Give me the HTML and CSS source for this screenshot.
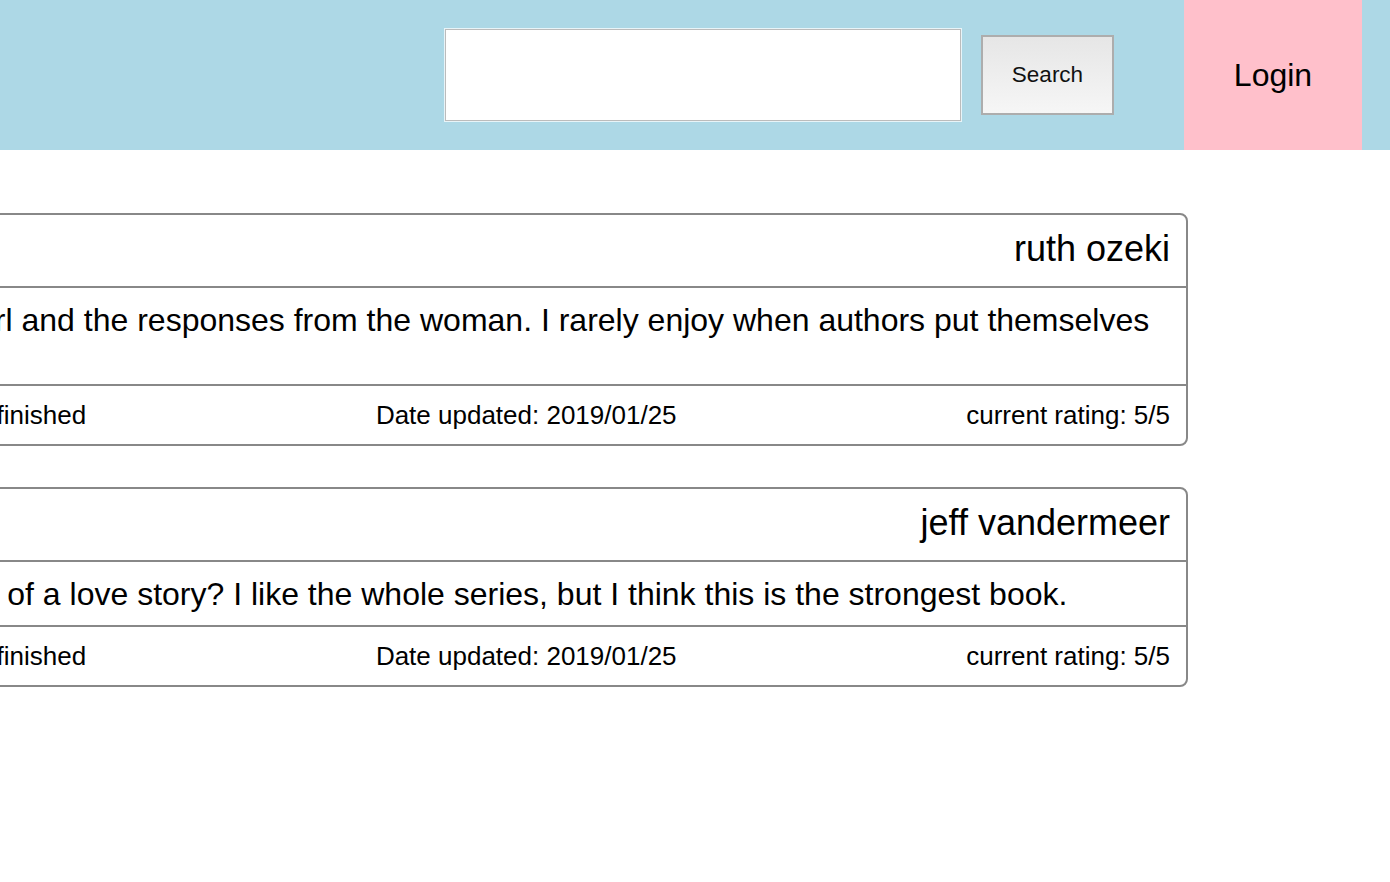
FILE: index.html
```html
<!DOCTYPE html>
<html lang="en">
<head>
<meta charset="utf-8">
<title>Book reviews</title>
<link rel="stylesheet" href="styles.css">
</head>
<body>
<header class="topbar">
  <form class="search">
    <input class="search-input" type="text" aria-label="Search">
    <button class="search-btn" type="button">Search</button>
  </form>
  <a class="login">Login</a>
</header>
<main class="reviews">
  <article class="card">
    <div class="card-head"><h2 class="author">ruth ozeki</h2></div>
    <p class="card-body">of the girl and the responses from the woman. I rarely enjoy when authors put themselves in it.</p>
    <div class="card-foot">
      <span>progress: finished</span>
      <span>Date updated: 2019/01/25</span>
      <span>current rating: 5/5</span>
    </div>
  </article>
  <article class="card">
    <div class="card-head"><h2 class="author">jeff vandermeer</h2></div>
    <p class="card-body">Is it kind of a love story? I like the whole series, but I think this is the strongest book.</p>
    <div class="card-foot">
      <span>progress: finished</span>
      <span>Date updated: 2019/01/25</span>
      <span>current rating: 5/5</span>
    </div>
  </article>
</main>
</body>
</html>
```
FILE: styles.css
```css
* { box-sizing: border-box; }

html, body {
  margin: 0;
  padding: 0;
  background: #fff;
  overflow: hidden;
}

body {
  font-family: "Liberation Sans", Arial, sans-serif;
  color: #000;
}

.topbar {
  display: flex;
  justify-content: flex-end;
  align-items: center;
  height: 150px;
  padding-right: 28px;
  background: #add8e6;
}

.search {
  display: flex;
  align-items: center;
  gap: 20px;
  margin: 0 70px 0 0;
}

.search-input {
  width: 516px;
  height: 92px;
  margin: 0;
  border: 1px solid #bcbcbc;
  box-shadow: 0 0 0 1px #e8f4f8;
  background: #fff;
  outline: none;
}

.search-btn {
  width: 133px;
  height: 80px;
  margin: 0;
  border: 2px solid #adadad;
  background: linear-gradient(#e6e6e6, #f6f6f6);
  font-family: "Liberation Sans", Arial, sans-serif;
  font-size: 22.5px;
  color: #111;
  padding: 0;
}

.login {
  display: flex;
  align-items: center;
  justify-content: center;
  align-self: stretch;
  width: 178px;
  background: #ffc0cb;
  font-size: 32px;
  color: #000;
}

.reviews {
  display: flex;
  flex-direction: column;
  gap: 41px;
  margin: 63px 202px 0 -137px;
}

.card {
  border: 2px solid #888;
  border-radius: 8px;
}

.card-head {
  padding: 14px 16px 17px;
  border-bottom: 2px solid #888;
}

.author {
  margin: 0;
  font-size: 36px;
  line-height: 40px;
  font-weight: normal;
  text-align: right;
}

.card-body {
  margin: 0;
  padding: 16px 18px 14px 16px;
  font-size: 32px;
  line-height: 33px;
  border-bottom: 2px solid #888;
}

.card-foot {
  display: flex;
  justify-content: space-between;
  padding: 14px 16px;
  font-size: 26px;
  line-height: 30px;
}
```
